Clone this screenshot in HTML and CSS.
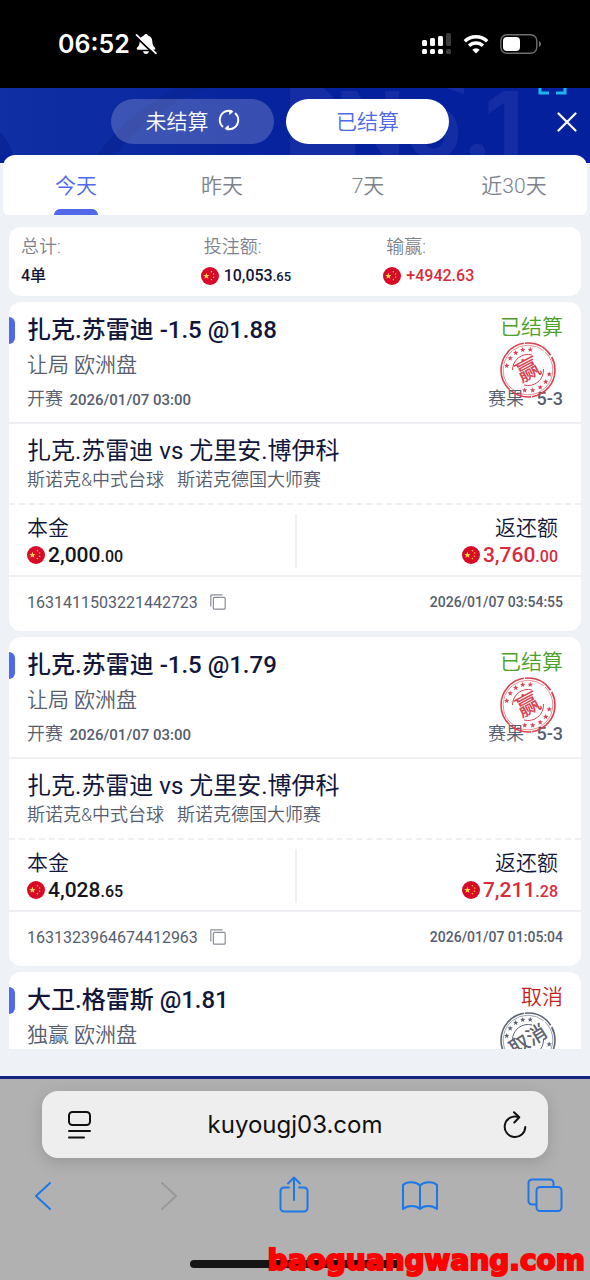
FILE: index.html
```html
<!DOCTYPE html>
<html lang="zh-CN">

<head>
    <meta charset="UTF-8">
    <meta name="viewport" content="width=device-width, initial-scale=1.0">
    <title>已结算</title>
    <link rel="stylesheet" href="styles.css">
</head>

<body>
    <svg class="sprite" aria-hidden="true">
        <symbol id="flag" viewBox="0 0 18 18">
            <circle cx="9" cy="9" r="9" fill="#d80a27" />
            <path d="M5.400 5.800l.8 2.300h2.400L6.700 9.500l.7 2.300-2-1.400-2 1.400.7-2.300-1.900-1.400h2.400z" fill="#ffda44" />
            <g fill="#f5b93c">
                <circle cx="10.400" cy="4.800" r=".8" />
                <circle cx="12.600" cy="7" r=".8" />
                <circle cx="12.600" cy="10.200" r=".8" />
                <circle cx="10.400" cy="12.600" r=".8" />
            </g>
        </symbol>
        <symbol id="star" viewBox="0 0 10 10">
            <path d="M5 0l1.300 3.400 3.700.2-2.900 2.300 1 3.600L5 7.500 1.900 9.500l1-3.600L0 3.600l3.700-.2z" />
        </symbol>
        <symbol id="ring" viewBox="0 0 56 56">
            <g fill="none" stroke="currentColor">
                <circle cx="28" cy="28" r="27" stroke-width="1.600" stroke-dasharray="38 1 22 1.500 60 1 30 2" />
                <circle cx="28" cy="28" r="24.800" stroke-width=".6" stroke-dasharray="50 2 30 1" />
                <path d="M12.500 28A15.500 15.500 0 0 1 32 13" stroke-width="1" />
                <path d="M43.500 27A15.500 15.500 0 0 1 24 43" stroke-width="1" />
            </g>
            <g fill="currentColor">
                <use href="#star" x="4" y="21" width="5.400" height="5.400" />
                <use href="#star" x="7.500" y="13.500" width="5.400" height="5.400" />
                <use href="#star" x="13" y="8" width="5.400" height="5.400" />
                <use href="#star" x="20" y="5" width="5.400" height="5.400" />
                <use href="#star" x="27.500" y="4.800" width="5.400" height="5.400" />
                <use href="#star" x="46.500" y="29.500" width="5.400" height="5.400" />
                <use href="#star" x="43" y="37" width="5.400" height="5.400" />
                <use href="#star" x="37.500" y="42.500" width="5.400" height="5.400" />
                <use href="#star" x="30" y="45.500" width="5.400" height="5.400" />
                <use href="#star" x="22" y="45.500" width="5.400" height="5.400" />
            </g>
        </symbol>
        <symbol id="copy" viewBox="0 0 16 16">
            <g fill="none" stroke="currentColor" stroke-width="1.200">
                <path d="M.8 12.500V1.500a.7.7 0 0 1 .7-.7h11" />
                <rect x="3.400" y="3.400" width="11.800" height="11.800" rx="1" />
            </g>
        </symbol>
    </svg>

    <div class="app">
        <div class="status">
            <span class="time">06:52</span>
            <svg width="22" height="22" viewBox="0 0 22 22">
                <path d="M11 1c-1 0-1.800.7-2 1.500C6 3.300 4.800 5.800 4.700 8.500c-.1 3.200-1 4.600-2.700 6.200-.7.800-.3 2 .8 2h16.400c1.100 0 1.500-1.200.8-2-1.700-1.600-2.600-3-2.700-6.200-.1-2.700-1.300-5.200-4.300-6C12.800 1.700 12 1 11 1zM8 18.300h6c-.3 1.600-1.500 2.700-3 2.700s-2.700-1.100-3-2.700z" fill="#fff" />
                <path d="M1.500 4.300L18.500 20.500" stroke="#000" stroke-width="1.800" />
                <path d="M1.500 1.800L21 20.300" stroke="#fff" stroke-width="1.700" stroke-linecap="round" />
            </svg>
            <div class="status-icons">
                <svg width="30" height="22" viewBox="0 0 30 22">
                    <g fill="#fff">
                        <rect x="0" y="7" width="5" height="6" rx="1.500" />
                        <rect x="8" y="5" width="5" height="8" rx="1.500" />
                        <rect x="16" y="3" width="5" height="10" rx="1.500" />
                        <rect x="0" y="16" width="5" height="5" rx="1.500" />
                        <rect x="8" y="16" width="5" height="5" rx="1.500" />
                        <rect x="16" y="16" width="5" height="5" rx="1.500" />
                    </g>
                    <g fill="#3c3c3c">
                        <rect x="24" y="0" width="5" height="13" rx="1.500" />
                        <rect x="24" y="16" width="5" height="5" rx="1.500" />
                    </g>
                </svg>
                <svg width="26" height="20" viewBox="0 0 26 20">
                    <g fill="none" stroke="#fff" stroke-width="3.400">
                        <path d="M1.800 7.300a16 16 0 0 1 22.400 0" />
                        <path d="M6 11.800a10 10 0 0 1 14 0" />
                    </g>
                    <path d="M13 19.500l-3.700-3.800a5.300 5.300 0 0 1 7.400 0z" fill="#fff" />
                </svg>
                <svg width="42" height="20" viewBox="0 0 42 20">
                    <rect x=".8" y=".8" width="36" height="18.400" rx="6" fill="none" stroke="#6e6e6e" stroke-width="1.400" />
                    <rect x="3" y="3" width="17" height="14" rx="4" fill="#fff" />
                    <path d="M39 7v6c1.200-.5 2-1.600 2-3s-.8-2.500-2-3z" fill="#6e6e6e" />
                </svg>
            </div>
        </div>

        <header class="header">
            <svg class="header-art" width="590" height="67" viewBox="0 0 590 67" aria-hidden="true">
                <path d="M180 0h32C176 10 140 34 116 67H97C122 34 150 12 180 0z" fill="#0a2597" />
                <path d="M0 44c6 6 10 13 13 23H0z" fill="#0a2597" />
                <path d="M290 0h33c16 10 28 36 28 67h-61zM446 0h18v6z" fill="#142da5" />
                <text x="524" y="70" class="art-text">No.1</text>
                <path d="M540 0v5h9M565 0v5h-9" fill="none" stroke="#1fb4ee" stroke-width="3" />
            </svg>
            <div class="switch">
                <button class="switch-btn">未结算
                    <svg width="22" height="22" viewBox="0 0 22 22" fill="none" stroke="#fff" stroke-width="1.900">
                        <path d="M5 18A9.300 9.300 0 0 1 8 2.200" />
                        <path d="M17 4A9.300 9.300 0 0 1 14 19.800" />
                        <path d="M7 2.600a9.300 9.300 0 0 1 7-.4M15 19.400a9.300 9.300 0 0 1-7 .4" />
                        <path d="M10.500.8l5 1.700-4 3.500zM11.500 21.200l-5-1.700 4-3.500z" fill="#fff" stroke="none" />
                    </svg>
                </button>
                <button class="switch-btn active">已结算</button>
            </div>
            <button class="close" aria-label="关闭">
                <svg width="20" height="20" viewBox="0 0 20 20">
                    <path d="M1.500 1.500l17 17M18.500 1.500l-17 17" stroke="#fff" stroke-width="2.200" stroke-linecap="round" />
                </svg>
            </button>
        </header>

        <main class="main">
            <nav class="tabs">
                <button class="tab active">今天</button>
                <button class="tab">昨天</button>
                <button class="tab">7天</button>
                <button class="tab">近30天</button>
            </nav>

            <div class="list">
                <section class="summary">
                    <div>
                        <div class="summary-label">总计:</div>
                        <div class="summary-value">4单</div>
                    </div>
                    <div>
                        <div class="summary-label">投注额:</div>
                        <div class="summary-value flagged"><svg class="flag"><use href="#flag" /></svg><span>10,053<small>.65</small></span></div>
                    </div>
                    <div>
                        <div class="summary-label">输赢:</div>
                        <div class="summary-value flagged red"><svg class="flag"><use href="#flag" /></svg><span>+4942.63</span></div>
                    </div>
                </section>

                <article class="bet">
                    <div class="bet-head">
                        <div class="row">
                            <h2 class="bet-title">扎克.苏雷迪 -1.5 @1.88</h2>
                            <span class="state green">已结算</span>
                        </div>
                        <div class="bet-type">让局 欧洲盘</div>
                        <div class="row bet-date">
                            <span>开赛 <b>2026/01/07 03:00</b></span>
                            <span>赛果 <b class="score">5-3</b></span>
                        </div>
                        <svg class="stamp win" viewBox="0 0 56 56">
                            <use href="#ring" />
                            <text x="28" y="36" transform="rotate(-28 28 28)">赢</text>
                        </svg>
                    </div>
                    <div class="match">
                        <h3 class="match-title">扎克.苏雷迪 vs 尤里安.博伊科</h3>
                        <div class="match-league"><span>斯诺克&amp;中式台球</span><span>斯诺克德国大师赛</span></div>
                    </div>
                    <div class="money">
                        <div class="money-col">
                            <div class="money-label">本金</div>
                            <div class="money-value"><svg class="flag"><use href="#flag" /></svg><span>2,000<small>.00</small></span></div>
                        </div>
                        <div class="money-col right">
                            <div class="money-label">返还额</div>
                            <div class="money-value red"><svg class="flag"><use href="#flag" /></svg><span>3,760<small>.00</small></span></div>
                        </div>
                    </div>
                    <div class="row bet-foot">
                        <span class="order">1631411503221442723
                            <button class="copy" aria-label="复制"><svg width="16" height="16"><use href="#copy" /></svg></button>
                        </span>
                        <time>2026/01/07 03:54:55</time>
                    </div>
                </article>

                <article class="bet">
                    <div class="bet-head">
                        <div class="row">
                            <h2 class="bet-title">扎克.苏雷迪 -1.5 @1.79</h2>
                            <span class="state green">已结算</span>
                        </div>
                        <div class="bet-type">让局 欧洲盘</div>
                        <div class="row bet-date">
                            <span>开赛 <b>2026/01/07 03:00</b></span>
                            <span>赛果 <b class="score">5-3</b></span>
                        </div>
                        <svg class="stamp win" viewBox="0 0 56 56">
                            <use href="#ring" />
                            <text x="28" y="36" transform="rotate(-28 28 28)">赢</text>
                        </svg>
                    </div>
                    <div class="match">
                        <h3 class="match-title">扎克.苏雷迪 vs 尤里安.博伊科</h3>
                        <div class="match-league"><span>斯诺克&amp;中式台球</span><span>斯诺克德国大师赛</span></div>
                    </div>
                    <div class="money">
                        <div class="money-col">
                            <div class="money-label">本金</div>
                            <div class="money-value"><svg class="flag"><use href="#flag" /></svg><span>4,028<small>.65</small></span></div>
                        </div>
                        <div class="money-col right">
                            <div class="money-label">返还额</div>
                            <div class="money-value red"><svg class="flag"><use href="#flag" /></svg><span>7,211<small>.28</small></span></div>
                        </div>
                    </div>
                    <div class="row bet-foot">
                        <span class="order">1631323964674412963
                            <button class="copy" aria-label="复制"><svg width="16" height="16"><use href="#copy" /></svg></button>
                        </span>
                        <time>2026/01/07 01:05:04</time>
                    </div>
                </article>

                <article class="bet">
                    <div class="bet-head">
                        <div class="row">
                            <h2 class="bet-title">大卫.格雷斯 @1.81</h2>
                            <span class="state dark-red">取消</span>
                        </div>
                        <div class="bet-type">独赢 欧洲盘</div>
                        <svg class="stamp cancel" viewBox="0 0 56 56">
                            <use href="#ring" />
                            <text x="28" y="35" transform="rotate(-32 28 28)">取消</text>
                        </svg>
                    </div>
                </article>
            </div>
        </main>

        <footer class="browser">
            <div class="address">
                <button aria-label="页面设置">
                    <svg width="24" height="28" viewBox="0 0 24 28" fill="none" stroke="#111" stroke-width="2" stroke-linecap="round">
                        <rect x="1" y="1" width="21" height="13" rx="3.500" />
                        <path d="M1 20h21M1 26.500h15" />
                    </svg>
                </button>
                <input class="url" type="text" value="kuyougj03.com" aria-label="网址">
                <button aria-label="刷新">
                    <svg width="24" height="28" viewBox="0 0 24 28" fill="none" stroke="#111" stroke-width="2" stroke-linecap="round" stroke-linejoin="round">
                        <path d="M15 5.900A10.300 10.300 0 1 0 22.300 16" />
                        <path d="M11 1.200l5.300 5-5 5.300" />
                    </svg>
                </button>
            </div>
            <nav class="toolbar">
                <button aria-label="后退">
                    <svg width="18" height="38" viewBox="0 0 18 38"><path d="M16 7L2 20l14 13" /></svg>
                </button>
                <button class="disabled" aria-label="前进" disabled>
                    <svg width="18" height="38" viewBox="0 0 18 38"><path d="M2 7l14 13L2 33" /></svg>
                </button>
                <button aria-label="分享">
                    <svg width="30" height="38" viewBox="0 0 30 38">
                        <path d="M10 11.500H5a3.500 3.500 0 0 0-3.500 3.500v17A3.500 3.500 0 0 0 5 35.500h20a3.500 3.500 0 0 0 3.500-3.500V15a3.500 3.500 0 0 0-3.500-3.500h-5M15 24V2M9 7.500L15 1.500l6 6" />
                    </svg>
                </button>
                <button aria-label="书签">
                    <svg width="38" height="38" viewBox="0 0 38 38">
                        <path d="M19 9.500C15 5.500 6 5 2 9v24c5-4 13-4 17 0 4-4 12-4 17 0V9c-4-4-13-3.500-17 .500zM19 9.500V33" />
                    </svg>
                </button>
                <button aria-label="标签页">
                    <svg width="36" height="38" viewBox="0 0 36 38">
                        <path d="M9 28.500H5A3.500 3.500 0 0 1 1.500 25V7A3.500 3.500 0 0 1 5 3.500h18A3.500 3.500 0 0 1 26.500 7v3" />
                        <rect x="9.500" y="11" width="25" height="24" rx="3.500" />
                    </svg>
                </button>
            </nav>
            <div class="home-bar"></div>
            <div class="watermark">baoguangwang.com</div>
        </footer>
    </div>
</body>

</html>
```

FILE: styles.css
```css
* {
    box-sizing: border-box;
}

body {
    font-family: Roboto, "Noto Sans CJK SC", sans-serif;
    margin: 0;
    color: #12163a;
    background-color: #eef1f5;
}

button {
    font: inherit;
    color: inherit;
    background: none;
    border: none;
    padding: 0;
    cursor: pointer;
}

svg {
    display: block;
    flex: none;
}

h2,
h3 {
    margin: 0;
}

small {
    line-height: 1;
}

.sprite {
    position: absolute;
    width: 0;
    height: 0;
}

.app {
    display: flex;
    flex-direction: column;
    height: 100vh;
    overflow: hidden;
}

/* status bar */
.status {
    display: flex;
    align-items: center;
    gap: 5px;
    height: 88px;
    padding: 0 48px 0 58px;
    background-color: #000;
    color: #fff;
    flex: none;
}

.time {
    font-family: Inter, sans-serif;
    font-size: 25px;
    font-weight: 600;
}

.status-icons {
    display: flex;
    align-items: center;
    gap: 11px;
    margin-left: auto;
}

/* header */
.header {
    position: relative;
    display: flex;
    align-items: center;
    height: 67px;
    padding: 0 13px 0 3px;
    background: linear-gradient(90deg, #102fa4, #04209c 60%);
    flex: none;
}

.header-art {
    position: absolute;
    top: 0;
    right: 0;
}

.art-text {
    font-family: Inter, sans-serif;
    font-size: 92px;
    font-weight: 700;
    text-anchor: end;
    fill: #142da5;
}

.switch {
    position: relative;
    display: flex;
    gap: 12px;
    margin: 0 auto;
}

.switch-btn {
    display: flex;
    align-items: center;
    justify-content: center;
    gap: 9px;
    width: 163px;
    height: 45px;
    padding-bottom: 3px;
    border-radius: 23px;
    background-color: rgba(255, 255, 255, 0.2);
    color: #fff;
    font-size: 21px;
    font-weight: 350;
}

.switch-btn.active {
    background-color: #fff;
    color: #4f69e8;
}

.close {
    position: relative;
}

/* content */
.main {
    display: flex;
    flex-direction: column;
    flex: 1;
    min-height: 0;
    padding-bottom: 27px;
    background: linear-gradient(#04209c 8px, #eef1f5 8px);
    border-bottom: 3px solid #14247f;
}

.tabs {
    display: flex;
    height: 60px;
    margin: 0 3px;
    background-color: #fff;
    border-radius: 12px 12px 6px 6px;
    flex: none;
}

.tab {
    position: relative;
    flex: 1;
    padding-bottom: 3px;
    font-size: 21px;
    font-weight: 350;
    color: #7d828c;
}

.tab.active {
    color: #4f69e8;
}

.tab.active::after {
    content: "";
    position: absolute;
    left: 50%;
    bottom: 0;
    width: 44px;
    height: 6px;
    margin-left: -22px;
    border-radius: 6px 6px 0 0;
    background-color: #4f69e8;
}

.list {
    display: flex;
    flex-direction: column;
    gap: 6px;
    flex: 1;
    min-height: 0;
    margin-top: 12px;
    padding: 0 9px;
    overflow: hidden;
}

.summary {
    display: grid;
    grid-template-columns: repeat(3, 1fr);
    padding: 5px 12px;
    background-color: #fff;
    border-radius: 12px;
    flex: none;
}

.summary-label {
    font-size: 18px;
    font-weight: 350;
    line-height: 29px;
    color: #7d828c;
}

.summary-value {
    display: flex;
    align-items: center;
    gap: 5px;
    font-size: 16px;
    font-weight: 500;
    line-height: 30px;
}

.summary-value.flagged {
    margin-left: -3px;
}

.summary-value small {
    font-size: 13px;
}

.flag {
    width: 18px;
    height: 18px;
}

.red,
.summary-value.red {
    color: #d92b3d;
}

/* bet card */
.bet {
    background-color: #fff;
    border-radius: 12px;
    flex: none;
}

.row {
    display: flex;
    align-items: center;
    justify-content: space-between;
}

.bet-head {
    position: relative;
    padding: 10px 18px 6px;
    border-bottom: 2px solid #eef0f3;
}

.bet-head::before {
    content: "";
    position: absolute;
    left: 0;
    top: 15px;
    width: 6px;
    height: 27px;
    border-radius: 0 6px 6px 0;
    background-color: #4f69e8;
}

.bet-title {
    font-size: 24px;
    font-weight: 500;
    line-height: 36px;
}

.state {
    font-size: 21px;
    font-weight: 350;
    line-height: 30px;
    padding-bottom: 6px;
}

.green {
    color: #4ca02c;
}

.dark-red {
    color: #c41f1f;
}

.bet-type {
    font-size: 21px;
    font-weight: 350;
    line-height: 34px;
    color: #565d6e;
}

.bet-date {
    font-size: 18px;
    font-weight: 350;
    line-height: 34px;
    color: #565d6e;
}

.bet-date b {
    margin-left: 2px;
    font-size: 15px;
    font-weight: 500;
    line-height: 1;
}

.bet-date .score {
    font-size: 18px;
    margin-left: 8px;
}

.stamp {
    position: absolute;
    top: 40px;
    right: 25px;
    width: 56px;
    height: 56px;
}

.stamp text {
    text-anchor: middle;
    fill: currentColor;
    font-family: "Noto Sans CJK SC", sans-serif;
}

.win {
    color: #d94452;
    font-size: 24px;
    font-weight: 500;
}

.cancel {
    color: #5d6474;
    font-size: 20px;
    font-weight: 500;
}

.match {
    padding: 11px 18px 10px;
    border-bottom: 2px dashed #eef0f3;
}

.match-title {
    font-size: 24px;
    font-weight: 400;
    line-height: 32px;
}

.match-league {
    display: flex;
    gap: 13px;
    font-size: 18px;
    font-weight: 350;
    line-height: 26px;
    color: #565d6e;
}

.money {
    display: flex;
    padding: 9px 18px 7px;
    border-bottom: 2px solid #eef0f3;
}

.money-col {
    width: 50%;
}

.money-col.right {
    display: flex;
    flex-direction: column;
    align-items: flex-end;
    padding-right: 5px;
    border-left: 2px solid #eef0f3;
}

.money-label {
    font-size: 21px;
    font-weight: 350;
    line-height: 28px;
}

.money-value {
    display: flex;
    align-items: center;
    gap: 3px;
    font-size: 21px;
    font-weight: 500;
    line-height: 26px;
    color: #14161c;
}

.money-value.red {
    color: #d92b3d;
}

.money-value small {
    font-size: 16px;
}

.bet-foot {
    height: 54px;
    padding: 0 18px 4px;
    font-size: 14px;
    font-weight: 500;
    color: #565d6e;
}

.order {
    display: flex;
    align-items: center;
    gap: 12px;
    font-size: 16px;
    font-weight: 400;
}

.copy {
    color: #8a8f99;
}

/* browser bar */
.browser {
    position: relative;
    padding: 12px 42px 12px;
    background-color: #b1b1b1;
    flex: none;
}

.address {
    display: flex;
    align-items: center;
    height: 67px;
    padding: 0 21px 0 26px;
    background-color: #eee;
    border-radius: 16px;
    box-shadow: 0 4px 16px rgba(0, 0, 0, 0.15);
}

.url {
    flex: 1;
    min-width: 0;
    padding: 0 5px 0 0;
    border: none;
    background: none;
    font-family: Inter, sans-serif;
    font-size: 24px;
    text-align: center;
    color: #111;
}

.toolbar {
    display: flex;
    align-items: center;
    justify-content: space-between;
    margin: 18px -17px 0 -19px;
}

.toolbar button {
    display: flex;
    justify-content: center;
    width: 40px;
}

.toolbar svg {
    fill: none;
    stroke: #1c78e6;
    stroke-width: 2;
    stroke-linecap: round;
    stroke-linejoin: round;
}

.toolbar .disabled svg {
    stroke: #999;
}

.home-bar {
    width: 210px;
    height: 8px;
    margin: 46px auto 0;
    border-radius: 4px;
    background-color: #151515;
}

.watermark {
    position: absolute;
    right: 5px;
    bottom: 3px;
    font-family: "DejaVu Sans", sans-serif;
    font-size: 28px;
    font-weight: 700;
    line-height: 32px;
    color: #f00;
    -webkit-text-stroke: 2px #f00;
}
```
